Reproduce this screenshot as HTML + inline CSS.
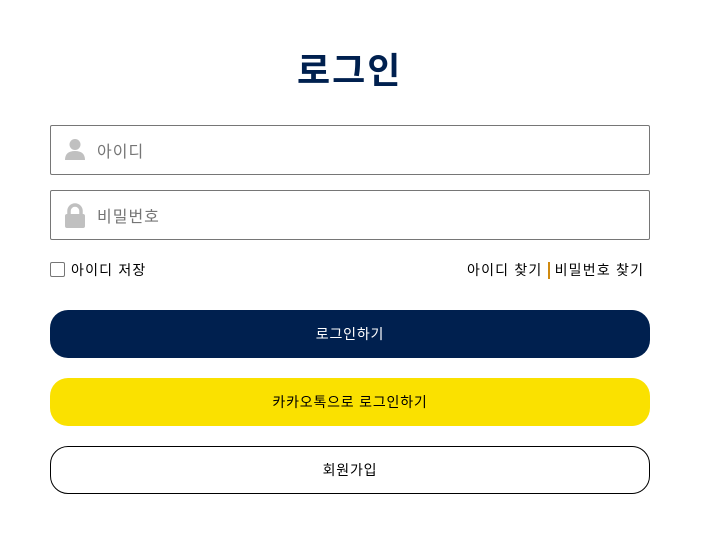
<!DOCTYPE html>
<html><head><meta charset="utf-8"><style>
*{box-sizing:border-box;margin:0;padding:0}
body{width:714px;height:555px;background:#fff;font-family:"Liberation Sans","Noto Sans CJK KR",sans-serif;position:relative;overflow:hidden}
h1{position:absolute;top:48px;left:297px;font-size:36px;font-weight:bold;color:#00204f;line-height:46px;letter-spacing:2px}
.inp{position:absolute;left:50px;width:600px;height:50px;border:1px solid #767676;border-radius:2px}
.inp span{position:absolute;left:46px;top:12px;font-size:16px;color:#757575;letter-spacing:1px}
.inp svg{position:absolute;left:13px;top:12px}
.chk{position:absolute;left:50px;top:262px;width:15px;height:15px;border:1px solid #767676;border-radius:2px}
.t{position:absolute;font-size:14px;color:#000;letter-spacing:1.2px;line-height:18px}
.btn{position:absolute;left:50px;width:600px;height:48px;border-radius:18px;text-align:center;line-height:48px;font-size:14px;letter-spacing:0.8px}
.sep{display:inline-block;width:2px;height:17px;background:#d08a10;vertical-align:-4px;margin:0 5px 0 0}
</style></head><body>
<h1>로그인</h1>
<div class="inp" style="top:125px"><svg width="22" height="24" viewBox="0 0 22 24"><circle cx="11" cy="6.5" r="5.5" fill="#c0c0c0"/><path d="M1 22 Q1 13 11 13 Q21 13 21 22 Z" fill="#c0c0c0"/></svg><span>아이디</span></div>
<div class="inp" style="top:190px"><svg width="22" height="26" viewBox="0 0 22 26"><path d="M5 11 V8 A6 6 0 0 1 17 8 V11" stroke="#c0c0c0" stroke-width="3.5" fill="none"/><rect x="1" y="11" width="20" height="14" rx="2" fill="#c0c0c0"/></svg><span>비밀번호</span></div>
<div class="chk"></div>
<div class="t" style="left:71px;top:261px">아이디 저장</div>
<div class="t" style="left:467px;top:261px">아이디 찾기 <span class="sep"></span>비밀번호 찾기</div>
<div class="btn" style="top:310px;background:#00204f;color:#fff">로그인하기</div>
<div class="btn" style="top:378px;background:#fae100;color:#000">카카오톡으로 로그인하기</div>
<div class="btn" style="top:446px;border:1px solid #000;line-height:46px;color:#000">회원가입</div>
</body></html>
